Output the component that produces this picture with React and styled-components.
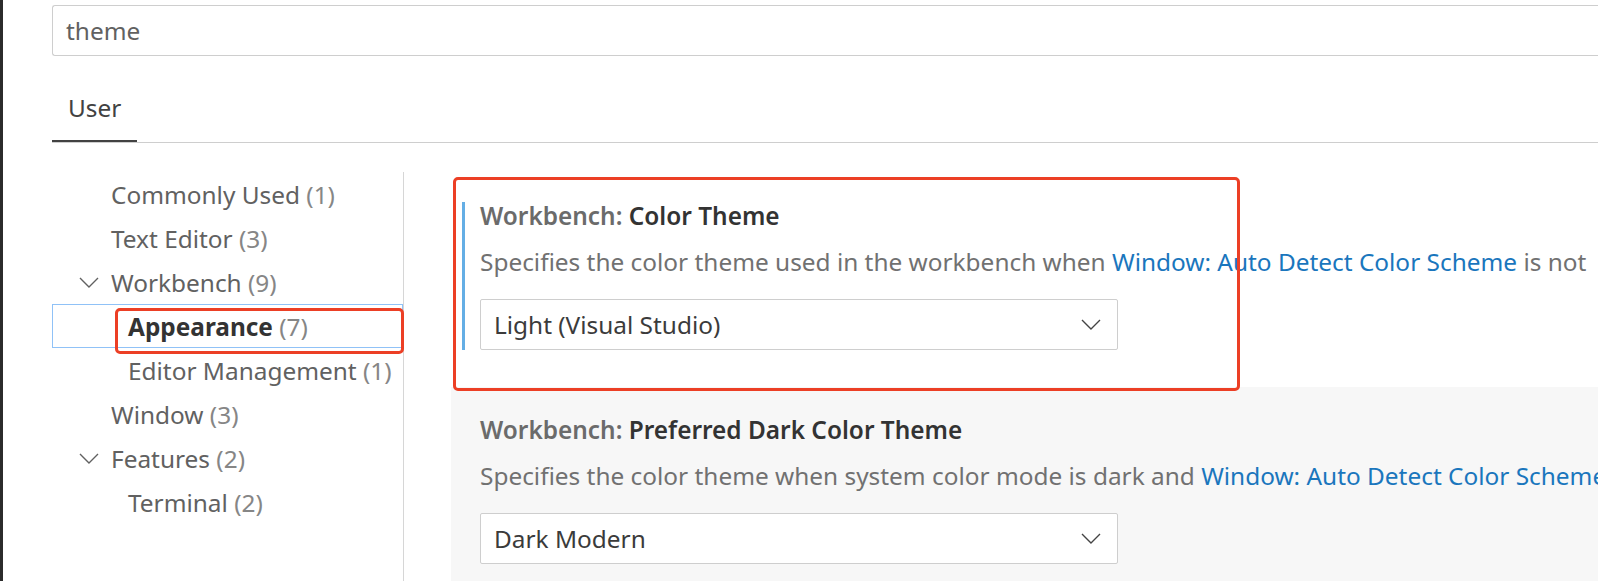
import React from "react";
import styled, { createGlobalStyle } from "styled-components";

const FS = "24.4px";

const Global = createGlobalStyle`
  html, body { margin: 0; padding: 0; background: #ffffff; overflow: hidden; }
  body { font-family: "Noto Sans", "Open Sans", sans-serif; }
`;

const Frame = styled.div`
  display: flex;
  height: 100vh;
  width: 100vw;
  overflow: hidden;
`;

const DarkEdge = styled.div`
  width: 3px;
  flex: none;
  background: #2b2b2b;
`;

const Main = styled.div`
  flex: 1;
  min-width: 0;
  padding-left: 49px;
  display: flex;
  flex-direction: column;
`;

const SearchBox = styled.div`
  margin-top: 5px;
  height: 49px;
  border: 1px solid #cecece;
  border-right: none;
  border-radius: 3px 0 0 3px;
  padding-left: 13px;
  display: flex;
  align-items: center;
  font-size: ${FS};
  color: #616161;
`;

const Tabs = styled.div`
  height: 86px;
  display: flex;
  align-items: flex-end;
  border-bottom: 1px solid #cecece;
`;

const Tab = styled.div`
  padding: 0 16px 16px;
  line-height: 32px;
  font-size: ${FS};
  color: #424242;
  border-bottom: 2px solid ${(p) => (p.$active ? "#424242" : "transparent")};
`;

const Body = styled.div`
  flex: 1;
  display: flex;
  min-height: 0;
`;

const Tree = styled.div`
  width: 351px;
  flex: none;
  margin-top: 29px;
  border-right: 1px solid #d6d6d6;
  display: flex;
  flex-direction: column;
`;

const Row = styled.div`
  position: relative;
  height: 44px;
  box-sizing: border-box;
  display: flex;
  align-items: center;
  padding-left: ${(p) => (p.$level === 2 ? 44 : 27)}px;
  font-size: ${FS};
  color: #616161;
  outline: ${(p) => (p.$selected ? "1px solid #90c2f7" : "none")};
  outline-offset: -1px;
  white-space: nowrap;
`;

const Twistie = styled.span`
  width: 32px;
  flex: none;
  display: flex;
  align-items: center;
`;

const Label = styled.span`
  font-weight: ${(p) => (p.$bold ? 700 : 400)};
  color: ${(p) => (p.$bold ? "#333333" : "#616161")};
`;

const Count = styled.span`
  color: #868686;
`;

const Annotation = styled.div`
  position: absolute;
  z-index: 2;
  border: 3px solid #ec3f25;
  border-radius: 5px;
  pointer-events: none;
  box-sizing: border-box;
`;

const TreeMark = styled(Annotation)`
  left: 63px;
  top: 4px;
  width: 289px;
  height: 46px;
`;

const SettingsPane = styled.div`
  flex: 1;
  min-width: 0;
  padding: 30px 0 0 47px;
  display: flex;
  flex-direction: column;
`;

const SettingItem = styled.div`
  position: relative;
  padding: 29px 0 37px 11px;
  background: ${(p) => (p.$hover ? "#f7f7f7" : "transparent")};
`;

const ItemMark = styled(Annotation)`
  left: 2px;
  top: 4px;
  width: 787px;
  height: 214px;
`;

const ItemContent = styled.div`
  border-left: 3px solid ${(p) => (p.$focused ? "#64aee5" : "transparent")};
  padding-left: 15px;
  display: flex;
  flex-direction: column;
`;

const Title = styled.div`
  line-height: 28px;
  font-size: ${FS};
  font-weight: 600;
  color: #333333;
  white-space: nowrap;
`;

const Category = styled.span`
  color: #6b6b6b;
`;

const Description = styled.div`
  margin-top: 18px;
  line-height: 28px;
  font-size: ${FS};
  color: #717171;
  white-space: nowrap;
`;

const Link = styled.span`
  color: #1a76bd;
`;

const Select = styled.div`
  margin-top: 23px;
  width: 638px;
  height: 51px;
  box-sizing: border-box;
  border: 1px solid #cecece;
  border-radius: 2px;
  background: #ffffff;
  padding: 0 16px 0 13px;
  display: flex;
  align-items: center;
  justify-content: space-between;
  font-size: ${FS};
  color: #3b3b3b;
`;

const Chevron = ({ color = "#444" }) => (
  <svg width="20" height="11" viewBox="0 0 20 11" fill="none">
    <path d="M1 1 L10 10 L19 1" stroke={color} strokeWidth="1.4" />
  </svg>
);

const treeItems = [
  { label: "Commonly Used", count: 1, level: 1 },
  { label: "Text Editor", count: 3, level: 1 },
  { label: "Workbench", count: 9, level: 1, expanded: true },
  { label: "Appearance", count: 7, level: 2, selected: true },
  { label: "Editor Management", count: 1, level: 2 },
  { label: "Window", count: 3, level: 1 },
  { label: "Features", count: 2, level: 1, expanded: true },
  { label: "Terminal", count: 2, level: 2 },
];

const settings = [
  {
    category: "Workbench: ",
    name: "Color Theme",
    desc: "Specifies the color theme used in the workbench when ",
    link: "Window: Auto Detect Color Scheme",
    tail: " is not",
    value: "Light (Visual Studio)",
    focused: true,
  },
  {
    category: "Workbench: ",
    name: "Preferred Dark Color Theme",
    desc: "Specifies the color theme when system color mode is dark and ",
    link: "Window: Auto Detect Color Scheme",
    tail: "",
    value: "Dark Modern",
    hover: true,
  },
];

export default function App() {
  return (
    <>
      <Global />
      <Frame>
        <DarkEdge />
        <Main>
          <SearchBox>theme</SearchBox>
          <Tabs>
            <Tab $active>User</Tab>
          </Tabs>
          <Body>
            <Tree>
              {treeItems.map((it) => (
                <Row key={it.label} $level={it.level} $selected={it.selected}>
                  <Twistie>
                    {it.expanded && <Chevron color="#616161" />}
                  </Twistie>
                  <Label $bold={it.selected}>{it.label}</Label>
                  <Count>&nbsp;({it.count})</Count>
                  {it.selected && <TreeMark />}
                </Row>
              ))}
            </Tree>
            <SettingsPane>
              {settings.map((s) => (
                <SettingItem key={s.name} $hover={s.hover}>
                  <ItemContent $focused={s.focused}>
                    <Title>
                      <Category>{s.category}</Category>
                      {s.name}
                    </Title>
                    <Description>
                      {s.desc}
                      <Link>{s.link}</Link>
                      {s.tail}
                    </Description>
                    <Select>
                      <span>{s.value}</span>
                      <Chevron />
                    </Select>
                  </ItemContent>
                  {s.focused && <ItemMark />}
                </SettingItem>
              ))}
            </SettingsPane>
          </Body>
        </Main>
      </Frame>
    </>
  );
}
